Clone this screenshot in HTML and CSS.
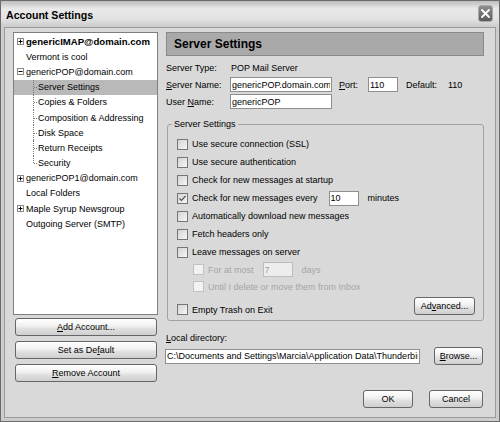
FILE: index.html
```html
<!DOCTYPE html>
<html>
<head>
<meta charset="utf-8">
<title>Account Settings</title>
<link rel="stylesheet" href="styles.css">
</head>
<body>
<div class="window">
  <div class="titlebar">
    <span class="title">Account Settings</span>
    <span class="close"><svg width="11" height="11" viewBox="0 0 11 11"><path d="M2 2 L9 9 M9 2 L2 9" stroke="#fff" stroke-width="1.8" stroke-linecap="round"/></svg></span>
  </div>
  <div class="frame">
    <div class="main">
      <div class="left">
        <div class="tree">
          <div class="row bold"><svg class="exp" width="7" height="7" viewBox="0 0 7 7"><rect x="0.5" y="0.5" width="6" height="6" fill="#fff" stroke="#8a8a8a"/><path d="M1.5 3.5h4M3.5 1.5v4" stroke="#000"/></svg>genericIMAP@domain.com</div>
          <div class="row leaf">Vermont is cool</div>
          <div class="row"><svg class="exp" width="7" height="7" viewBox="0 0 7 7"><rect x="0.5" y="0.5" width="6" height="6" fill="#fff" stroke="#8a8a8a"/><path d="M1.5 3.5h4" stroke="#000"/></svg>genericPOP@domain.com</div>
          <div class="row child selected">Server Settings</div>
          <div class="row child">Copies &amp; Folders</div>
          <div class="row child">Composition &amp; Addressing</div>
          <div class="row child">Disk Space</div>
          <div class="row child">Return Receipts</div>
          <div class="row child last">Security</div>
          <div class="row"><svg class="exp" width="7" height="7" viewBox="0 0 7 7"><rect x="0.5" y="0.5" width="6" height="6" fill="#fff" stroke="#8a8a8a"/><path d="M1.5 3.5h4M3.5 1.5v4" stroke="#000"/></svg>genericPOP1@domain.com</div>
          <div class="row leaf">Local Folders</div>
          <div class="row"><svg class="exp" width="7" height="7" viewBox="0 0 7 7"><rect x="0.5" y="0.5" width="6" height="6" fill="#fff" stroke="#8a8a8a"/><path d="M1.5 3.5h4M3.5 1.5v4" stroke="#000"/></svg>Maple Syrup Newsgroup</div>
          <div class="row leaf">Outgoing Server (SMTP)</div>
        </div>
        <div class="acct-buttons">
          <button class="btn"><u>A</u>dd Account...</button>
          <button class="btn">Set as De<u>f</u>ault</button>
          <button class="btn"><u>R</u>emove Account</button>
        </div>
      </div>
      <div class="right">
        <div class="header">Server Settings</div>
        <div class="type-row"><span class="lbl">Server Type:</span><span class="val">POP Mail Server</span></div>
        <div class="field-row">
          <span class="lbl"><u>S</u>erver Name:</span>
          <input class="tb name" type="text" value="genericPOP.domain.com">
          <span class="port-lbl"><u>P</u>ort:</span>
          <input class="tb port" type="text" value="110">
          <span class="def-lbl">Default:</span>
          <span>110</span>
        </div>
        <div class="field-row">
          <span class="lbl">User <u>N</u>ame:</span>
          <input class="tb name" type="text" value="genericPOP">
        </div>
        <div class="group">
          <span class="group-title">Server Settings</span>
          <div class="cb-row"><span class="cb"></span>Use secure connection (SSL)</div>
          <div class="cb-row"><span class="cb"></span>Use secure authentication</div>
          <div class="cb-row"><span class="cb"></span>Check for new messages at startup</div>
          <div class="cb-row"><span class="cb checked"><svg width="9" height="9" viewBox="0 0 9 9"><path d="M1.5 4.5 L3.5 6.5 L7.5 2" fill="none" stroke="#555" stroke-width="1.2"/></svg></span>Check for new messages every<input class="tb mins" type="text" value="10"><span class="unit">minutes</span></div>
          <div class="cb-row"><span class="cb"></span>Automatically download new messages</div>
          <div class="cb-row"><span class="cb"></span>Fetch headers only</div>
          <div class="cb-row"><span class="cb"></span>Leave messages on server</div>
          <div class="cb-row sub disabled"><span class="cb"></span>For at most<input class="tb days" type="text" value="7" disabled><span class="unit">days</span></div>
          <div class="cb-row sub disabled"><span class="cb"></span>Until I delete or move them from Inbox</div>
          <div class="last-row">
            <div class="cb-line"><span class="cb"></span>Empty Trash on Exit</div>
            <button class="btn adv">Ad<u>v</u>anced...</button>
          </div>
        </div>
        <div class="local-lbl"><u>L</u>ocal directory:</div>
        <div class="local-row">
          <input class="tb dir" type="text" value="C:\Documents and Settings\Marcia\Application Data\Thunderbird\Profiles">
          <button class="btn browse"><u>B</u>rowse...</button>
        </div>
      </div>
    </div>
    <div class="footer">
      <button class="btn ok">OK</button>
      <button class="btn cancel">Cancel</button>
    </div>
  </div>
</div>
</body>
</html>
```

FILE: styles.css
```css
html, body {
  margin: 0;
  padding: 0;
}
body {
  font-family: "Liberation Sans", Arial, sans-serif;
  font-size: 9px;
  color: #000;
  background: #d9d9d9;
}
u {
  text-decoration: underline;
}
.window {
  width: 500px;
  height: 422px;
  box-sizing: border-box;
  border: 1px solid #6b6b6b;
  background: #cdcdcd;
  display: flex;
  flex-direction: column;
  overflow: hidden;
}
.titlebar {
  height: 26px;
  flex: none;
  display: flex;
  align-items: center;
  justify-content: space-between;
  padding: 0 6px 0 5px;
  background: linear-gradient(#bdbdbd 0, #e9e9e9 30%, #e4e4e4 65%, #cccccc 100%);
}
.title {
  font-weight: bold;
  font-size: 10.6px;
  margin-top: 1px;
}
.close {
  width: 15px;
  height: 17px;
  box-sizing: border-box;
  border: 1px solid #a8a8a8;
  border-radius: 3px;
  background: linear-gradient(#8e8e8e, #5c5c5c);
  display: flex;
  align-items: center;
  justify-content: center;
  margin-top: -1px;
}
.frame {
  flex: 1;
  margin: 0 3px 3px;
  border: 1px solid #9b9b9b;
  background: #d9d9d9;
  padding: 4px 11px 0 8px;
  display: flex;
  flex-direction: column;
}
.main {
  display: flex;
  gap: 8px;
  height: 350px;
}
.left {
  width: 145px;
  flex: none;
  display: flex;
  flex-direction: column;
}
.tree {
  height: 283px;
  box-sizing: border-box;
  border: 1px solid #7f7f7f;
  background: #fff;
  padding-top: 1px;
}
.row {
  height: 15.2px;
  display: flex;
  align-items: center;
  padding-left: 3px;
  white-space: nowrap;
  position: relative;
}
.row.bold {
  font-weight: bold;
  font-size: 9.6px;
}
.exp {
  flex: none;
  margin-right: 2px;
}
.row.leaf {
  padding-left: 12px;
}
.row.child {
  padding-left: 24px;
}
.row.child::before {
  content: "";
  position: absolute;
  left: 19px;
  top: 0;
  bottom: 0;
  border-left: 1px dotted #7a7a7a;
}
.row.child.last::before {
  bottom: 50%;
}
.row.child::after {
  content: "";
  position: absolute;
  left: 20px;
  top: 50%;
  width: 3px;
  border-top: 1px dotted #7a7a7a;
}
.row.selected {
  background: #b9b9b9;
}
.acct-buttons {
  display: flex;
  flex-direction: column;
  gap: 5px;
  margin: 3px 1px 0 2px;
}
.btn {
  height: 18px;
  box-sizing: border-box;
  border: 1px solid #666;
  border-radius: 3px;
  background: linear-gradient(#ffffff, #f0f0f0 45%, #e0e0e0 60%, #cfcfcf);
  font-family: inherit;
  font-size: 9px;
  color: #000;
  padding: 0;
  margin: 0;
}
.right {
  width: 318px;
  flex: none;
  display: flex;
  flex-direction: column;
}
.header {
  height: 24px;
  box-sizing: border-box;
  border: 1px solid #8a8a8a;
  background: #a9a9a9;
  font-weight: bold;
  font-size: 12px;
  padding-left: 7px;
  display: flex;
  align-items: center;
}
.type-row {
  margin-top: 5px;
  height: 14px;
  display: flex;
  align-items: center;
}
.val {
  padding-left: 1px;
}
.field-row {
  margin-top: 2px;
  height: 15px;
  display: flex;
  align-items: center;
  white-space: nowrap;
}
.lbl {
  width: 64px;
  flex: none;
}
.tb {
  height: 15px;
  box-sizing: border-box;
  border: 1px solid #8e8e8e;
  background: #fff;
  font-family: inherit;
  font-size: 9px;
  color: #000;
  padding: 0 1px;
  margin: 0;
  outline: none;
}
.tb.name {
  width: 102px;
}
.port-lbl {
  margin-left: 7px;
  width: 29px;
}
.tb.port {
  width: 30px;
}
.def-lbl {
  margin-left: 8px;
  width: 42px;
}
.group {
  margin: 15px 0 0 1px;
  border: 1px solid #a2a2a2;
  border-radius: 3px;
  padding: 10px 8px 5px 9px;
  position: relative;
}
.group-title {
  position: absolute;
  top: -7px;
  left: 4px;
  padding: 0 2px;
  background: #d9d9d9;
  line-height: 12px;
}
.cb-row {
  height: 18px;
  display: flex;
  align-items: center;
  white-space: nowrap;
}
.cb {
  width: 11px;
  height: 11px;
  box-sizing: border-box;
  border: 1px solid #767676;
  background: linear-gradient(135deg, #d4d4d4, #f6f6f6);
  margin-right: 4px;
  flex: none;
  display: flex;
  align-items: center;
  justify-content: center;
}
.tb.mins {
  width: 30px;
  margin-left: 11px;
}
.unit {
  margin-left: 9px;
}
.cb-row.sub {
  height: 17px;
  padding-left: 16px;
}
.disabled {
  color: #a5a5a5;
}
.disabled .cb {
  border-color: #c2c2c2;
  background: #f2f2f2;
}
.tb.days {
  width: 30px;
  margin-left: 9px;
  background: #ededed;
  border-color: #bdbdbd;
  color: #a0a0a0;
}
.last-row {
  height: 20px;
  display: flex;
  align-items: flex-end;
  justify-content: space-between;
}
.cb-line {
  display: flex;
  align-items: center;
  height: 11px;
}
.btn.adv {
  width: 61px;
}
.local-lbl {
  margin-top: 11px;
  height: 12px;
  line-height: 12px;
}
.local-row {
  margin-top: 3px;
  height: 18px;
  display: flex;
  align-items: center;
  justify-content: space-between;
}
.tb.dir {
  width: 255px;
  margin-left: -1px;
}
.btn.browse {
  width: 49px;
  margin-right: 1px;
}
.footer {
  display: flex;
  justify-content: flex-end;
  gap: 16px;
  margin-top: 8px;
}
.btn.ok {
  width: 50px;
}
.btn.cancel {
  width: 54px;
  margin-right: 1px;
}
```
